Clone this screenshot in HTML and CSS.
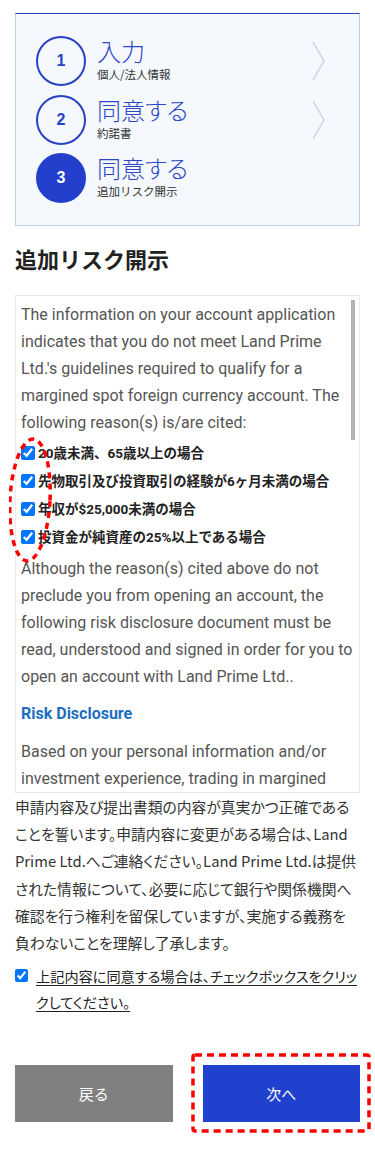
FILE: index.html
```html
<!DOCTYPE html>
<html lang="ja">
<head>
<meta charset="utf-8">
<title>追加リスク開示</title>
<link rel="stylesheet" href="styles.css">
</head>
<body>
<div class="page">
  <div class="steps">
    <div class="step">
      <div class="num">1</div>
      <div class="label"><div class="title">入力</div><div class="sub">個人/法人情報</div></div>
      <svg class="chev" width="14" height="40" viewBox="0 0 14 40"><polyline points="1,1 12,20 1,39" fill="none" stroke="#c9d9ec" stroke-width="1.5"/></svg>
    </div>
    <div class="step">
      <div class="num">2</div>
      <div class="label"><div class="title">同意する</div><div class="sub">約諾書</div></div>
      <svg class="chev" width="14" height="40" viewBox="0 0 14 40"><polyline points="1,1 12,20 1,39" fill="none" stroke="#c9d9ec" stroke-width="1.5"/></svg>
    </div>
    <div class="step">
      <div class="num active">3</div>
      <div class="label"><div class="title">同意する</div><div class="sub">追加リスク開示</div></div>
    </div>
  </div>

  <h1 class="heading">追加リスク開示</h1>

  <div class="disclosure">
    <div class="scroll">
      <p>The information on your account application indicates that you do not meet Land Prime Ltd.'s guidelines required to qualify for a margined spot foreign currency account. The following reason(s) is/are cited:</p>
      <ul class="reasons">
        <li><input type="checkbox" checked><span>20歳未満、65歳以上の場合</span></li>
        <li><input type="checkbox" checked><span>先物取引及び投資取引の経験が6ヶ月未満の場合</span></li>
        <li><input type="checkbox" checked><span>年収が$25,000未満の場合</span></li>
        <li><input type="checkbox" checked><span>投資金が純資産の25%以上である場合</span></li>
      </ul>
      <p>Although the reason(s) cited above do not preclude you from opening an account, the following risk disclosure document must be read, understood and signed in order for you to open an account with Land Prime Ltd..</p>
      <h2 class="risk-title">Risk Disclosure</h2>
      <p>Based on your personal information and/or investment experience, trading in margined</p>
    </div>
    <div class="thumb"></div>
    <svg class="mark-ellipse" width="48" height="134" viewBox="0 0 48 134"><ellipse cx="21" cy="67" rx="20" ry="61" transform="rotate(3 21 67)" fill="none" stroke="#ff0000" stroke-width="3.5" stroke-dasharray="6 5"/></svg>
  </div>

  <p class="pledge">申請内容及び提出書類の内容が真実かつ正確である<br>ことを誓います。申請内容に変更がある場合は、Land<br>Prime Ltd.へご連絡ください。Land Prime Ltd.は提供<br>された情報について、必要に応じて銀行や関係機関へ<br>確認を行う権利を留保していますが、実施する義務を<br>負わないことを理解し了承します。</p>

  <label class="agree"><input type="checkbox" checked><span>上記内容に同意する場合は、チェックボックスをクリッ<br>クしてください。</span></label>

  <div class="buttons">
    <button class="btn back" type="button">戻る</button>
    <div class="next-wrap">
      <button class="btn next" type="button">次へ</button>
      <svg class="mark-rect" width="180" height="80" viewBox="0 0 180 80"><rect x="2" y="2" width="176" height="76" rx="2" fill="none" stroke="#ff0000" stroke-width="3.5" stroke-dasharray="7 5"/></svg>
    </div>
  </div>
</div>
</body>
</html>
```

FILE: styles.css
```css
* { box-sizing: border-box; }
body {
  margin: 0;
  background: #fff;
  font-family: Roboto, "Noto Sans CJK JP", sans-serif;
  color: #333;
}
.page {
  padding: 13px 15px 30px;
}
.steps {
  background: #f5f9fe;
  border: 1px solid #bccfe3;
  border-top: 1px solid #2a44c4;
  padding: 22px 0 22px 20px;
  display: flex;
  flex-direction: column;
  gap: 8.5px;
}
.step {
  display: flex;
  align-items: center;
  height: 50px;
}
.num {
  width: 50px;
  height: 50px;
  border-radius: 50%;
  border: 2px solid #2742c4;
  color: #2742c4;
  display: flex;
  align-items: center;
  justify-content: center;
  font-family: "Liberation Sans", Arial, sans-serif;
  font-weight: bold;
  font-size: 16px;
  flex: none;
}
.num.active {
  background: #2340cc;
  border-color: #2340cc;
  color: #fff;
}
.label {
  margin-left: 11px;
  align-self: flex-start;
}
.title {
  font-family: "Noto Sans CJK JP", sans-serif;
  font-feature-settings: "palt";
  font-size: 24px;
  line-height: 30px;
  color: #2c46c6;
  font-weight: 300;
}
.sub {
  font-family: "Noto Sans CJK JP", sans-serif;
  font-size: 11.5px;
  line-height: 16px;
  color: #333;
}
.chev {
  margin-left: auto;
  margin-right: 33px;
  display: block;
}
.heading {
  font-family: "Noto Sans CJK JP", sans-serif;
  font-size: 22px;
  line-height: 30px;
  font-weight: bold;
  color: #222;
  margin: 17px 0 22px;
}
.disclosure {
  position: relative;
}
.scroll {
  height: 498px;
  overflow: hidden;
  border: 1px solid #ebebeb;
  padding: 5px 4px 0 5px;
  font-size: 16px;
  line-height: 27px;
  color: #555;
}
.scroll p {
  margin: 0;
}
.reasons {
  list-style: none;
  margin: 3px 0 4px;
  padding: 0;
}
.reasons li {
  display: flex;
  align-items: center;
  height: 28px;
  font-size: 13.5px;
  font-weight: bold;
  color: #222;
}
.reasons input {
  margin: 0 3px 0 0;
  width: 14px;
  height: 14px;
}
.risk-title {
  font-size: 16px;
  font-weight: bold;
  color: #1d6ec2;
  line-height: 27px;
  margin: 10px 0 11px;
}
.thumb {
  position: absolute;
  top: 5px;
  right: 5px;
  width: 4px;
  height: 140px;
  background: #b3b3b3;
}
.mark-ellipse {
  position: absolute;
  left: -6px;
  top: 138px;
}
.pledge {
  margin: 0;
  font-family: "Noto Sans CJK JP", sans-serif;
  font-feature-settings: "palt";
  font-size: 14.8px;
  line-height: 27.2px;
  color: #333;
}
.agree {
  display: flex;
  align-items: flex-start;
  margin-top: 7px;
  font-family: "Noto Sans CJK JP", sans-serif;
  font-feature-settings: "palt";
  font-size: 14.2px;
  line-height: 26px;
  color: #222;
}
.agree input {
  margin: 6px 8px 0 0;
  width: 13px;
  height: 13px;
  flex: none;
}
.agree span {
  text-decoration: underline;
  text-underline-offset: 3px;
}
.buttons {
  display: grid;
  grid-template-columns: 1fr 1fr;
  gap: 30px;
  margin-top: 50px;
}
.btn {
  height: 57px;
  border: 0;
  color: #fff;
  font-family: "Noto Sans CJK JP", sans-serif;
  font-size: 15px;
  width: 100%;
  display: block;
}
.back {
  background: #808080;
}
.next {
  background: #2040ce;
}
.next-wrap {
  position: relative;
}
.mark-rect {
  position: absolute;
  left: -12px;
  top: -12px;
}
```
